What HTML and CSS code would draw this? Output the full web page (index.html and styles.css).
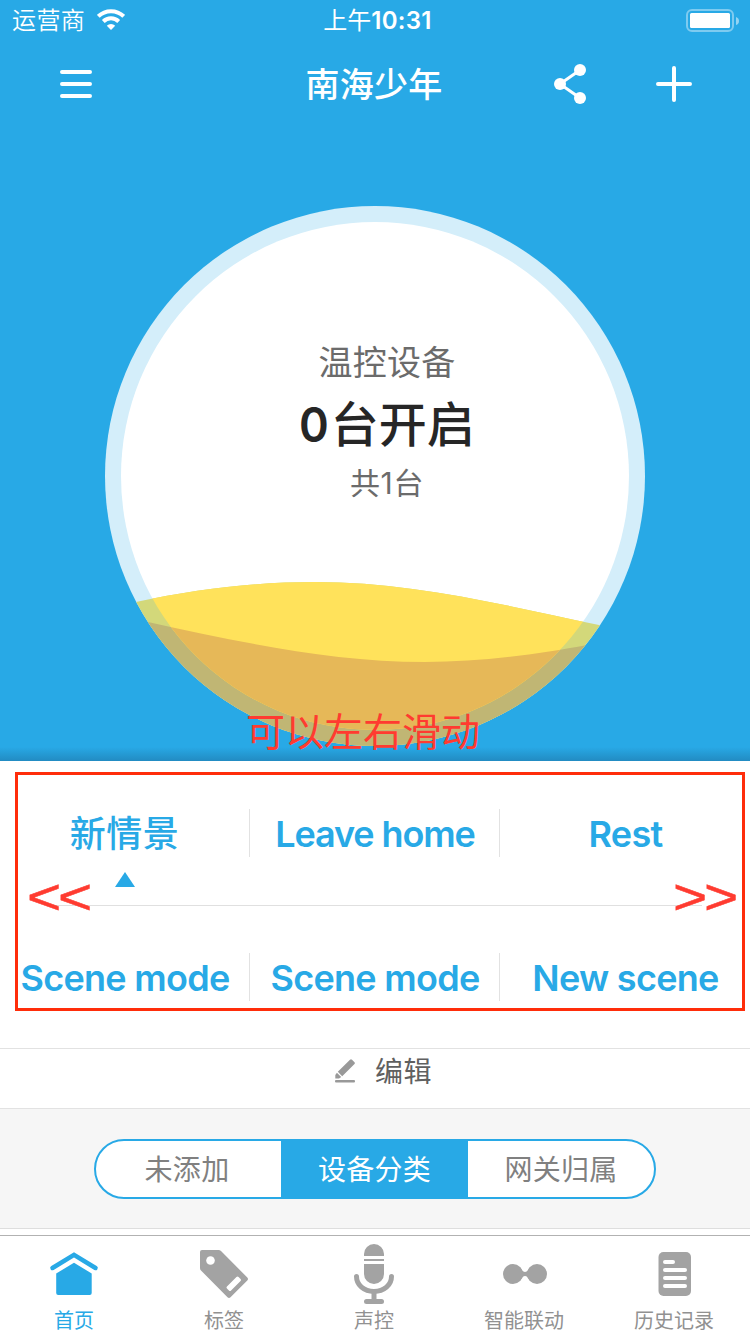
FILE: index.html
```html
<!DOCTYPE html>
<html lang="zh-CN">
<head>
<meta charset="utf-8">
<title>南海少年</title>
<link rel="stylesheet" href="styles.css">
</head>
<body>
<main class="app">
  <section class="hero">
    <div class="status">
      <div class="carrier"><span>运营商</span>
        <svg width="28" height="21" viewBox="0 0 28 21"><g fill="none" stroke="#fff" stroke-width="4"><path d="M1.300 7.300a18.200 18.200 0 0 1 25.400 0"/><path d="M6.300 12.500a11 11 0 0 1 15.400 0"/></g><path d="M14 21l-4.200-4.300a6.200 6.200 0 0 1 8.400 0z" fill="#fff"/></svg>
      </div>
      <div class="clock">上午<b>10:31</b></div>
      <svg class="battery" width="54" height="24" viewBox="0 0 54 24"><rect x="1" y="1" width="46" height="21" rx="5" fill="none" stroke="#fff" stroke-opacity=".4" stroke-width="2"/><rect x="4" y="4" width="40" height="15" rx="1.500" fill="#fff"/><path d="M50 8q3 1 3 4t-3 4z" fill="#fff" fill-opacity=".5"/></svg>
    </div>
    <header class="nav">
      <svg width="32" height="28" viewBox="0 0 32 28" stroke="#fff" stroke-width="4" stroke-linecap="round"><path d="M2 2h28M2 14h28M2 26h28"/></svg>
      <h1>南海少年</h1>
      <div class="actions">
        <svg width="34" height="40" viewBox="0 0 34 40"><path d="M27 6L7 20l20 14" fill="none" stroke="#fff" stroke-width="3"/><g fill="#fff"><circle cx="27" cy="6" r="6"/><circle cx="7" cy="20" r="6"/><circle cx="27" cy="34" r="6"/></g></svg>
        <svg width="36" height="36" viewBox="0 0 36 36" stroke="#fff" stroke-width="4" stroke-linecap="round"><path d="M18 2v32M2 18h32"/></svg>
      </div>
    </header>
    <div class="gauge">
      <svg width="540" height="540" viewBox="105 206 540 540">
        <defs>
          <clipPath id="outer"><circle cx="375" cy="476" r="270"/></clipPath>
          <clipPath id="inner"><circle cx="375" cy="476" r="254"/></clipPath>
          <path id="back" d="M105 609L136 602C200 588 260 582 315 582C410 582 500 604 599 625L645 635V746H105z"/>
          <path id="front" d="M105 612L148 622C240 642 330 662 425 662C480 662 540 654 587 645L645 634V746H105z"/>
        </defs>
        <circle cx="375" cy="476" r="270" fill="#d4eefa"/>
        <circle cx="375" cy="476" r="254" fill="#fff"/>
        <g clip-path="url(#outer)"><use href="#back" fill="#d3d87a"/><use href="#front" fill="#c0b674"/></g>
        <g clip-path="url(#inner)"><use href="#back" fill="#ffe25b"/><use href="#front" fill="#e6b858"/></g>
      </svg>
      <div class="reading">
        <p class="kind">温控设备</p>
        <p class="count"><span>0</span>台开启</p>
        <p class="total">共1台</p>
      </div>
    </div>
    <p class="hint">可以左右滑动</p>
  </section>

  <section class="scenes">
    <div class="scene-row">
      <div class="scene cjk active">新情景</div><div class="scene long">Leave home</div><div class="scene">Rest</div>
    </div>
    <hr class="rule">
    <div class="scene-row">
      <div class="scene">Scene mode</div><div class="scene">Scene mode</div><div class="scene">New scene</div>
    </div>
    <div class="frame"></div>
    <span class="arrows left">&lt;&lt;</span>
    <span class="arrows right">&gt;&gt;</span>
  </section>

  <div class="edit">
    <svg width="21" height="24" viewBox="0 0 21 24" fill="#999"><path d="M15 .8q1-1 2 0l2.500 2.500q.8.8 0 1.600L7.200 17.200 2.800 12.800z"/><path d="M1.900 13.700L6.200 18 4 19.500H.3v-3.500z"/><rect x="0" y="21" width="20" height="2.500" rx="1"/></svg>
    <span>编辑</span>
  </div>

  <div class="filter">
    <div class="segments"><div class="first">未添加</div><div class="on">设备分类</div><div>网关归属</div></div>
  </div>

  <nav class="tabs">
    <div class="tab on"><svg width="60" height="60" viewBox="0 0 60 60"><path d="M8.500 24L30 10.800 51.500 24" fill="none" stroke="#28a9e6" stroke-width="4.500" stroke-linecap="round"/><path d="M30 18.700L47.700 29.500V49q0 2-2 2H14.200q-2 0-2-2V29.500z" fill="#28a9e6"/></svg>首页</div>
    <div class="tab"><svg width="60" height="60" viewBox="0 0 60 60"><path d="M8 6H24.500q1.500 0 2.500 1L53.300 33.500q1.400 1.500 0 3L36.500 53.300q-1.500 1.400-3 0L7 26.500q-1-1-1-2.500V8q0-2 2-2z" fill="#a3a3a3"/><circle cx="16.500" cy="16.500" r="4.300" fill="#fff"/><path d="M43.500 34L45.500 36 36 45.500 34 43.500z" fill="#fff" stroke="#fff" stroke-width="3" stroke-linejoin="round"/></svg>标签</div>
    <div class="tab"><svg width="60" height="60" viewBox="0 0 60 60"><path d="M20 12V10a10 10 0 0 1 20 0v2zM20 15h20v2H20zM20 20h20v10a10 10 0 0 1-20 0z" fill="#a3a3a3"/><path d="M12.500 32.500C12.500 41 20 47.500 30 47.500S47.500 41 47.500 32.500" fill="none" stroke="#a3a3a3" stroke-width="5" stroke-linecap="round"/><path d="M30 48v9" stroke="#a3a3a3" stroke-width="5"/><path d="M22.500 57.500h15" stroke="#a3a3a3" stroke-width="5" stroke-linecap="round"/></svg>声控</div>
    <div class="tab"><svg width="60" height="60" viewBox="0 0 60 60" fill="#a3a3a3"><circle cx="19" cy="30" r="10"/><circle cx="43" cy="30" r="10"/><path d="M26 23Q28.500 28 31 28T36 23V37Q33.500 32 31 32T26 37z"/></svg>智能联动</div>
    <div class="tab"><svg width="60" height="60" viewBox="0 0 60 60"><rect x="14.500" y="8" width="32.500" height="44" rx="5" fill="#a3a3a3"/><path d="M21 18h8M21 26h20M21 34h20M21 42h20" stroke="#fff" stroke-width="4" stroke-linecap="round"/></svg>历史记录</div>
  </nav>
</main>
</body>
</html>
```

FILE: styles.css
```css
* { box-sizing: border-box; margin: 0; padding: 0; }
body { width: 750px; height: 1334px; overflow: hidden; background: #fff; font-family: Inter, "Noto Sans CJK SC", sans-serif; }
svg { display: block; flex: none; }
.app { display: flex; flex-direction: column; height: 1334px; }

.hero { position: relative; height: 761px; background: linear-gradient(to top, #228bc2 0, #28a9e6 14px); color: #fff; }
.status { display: grid; grid-template-columns: 1fr auto 1fr; align-items: center; height: 41px; padding: 0 10px 0 12px; font-size: 24px; line-height: 41px; }
.carrier { display: flex; align-items: center; gap: 12px; font-weight: 350; letter-spacing: .4px; }
.carrier svg { margin-top: -2px; }
.clock { padding: 1px 0 0 3px; line-height: 40px; }
.clock b { font-weight: 600; font-size: 24px; letter-spacing: .3px; }
.battery { justify-self: end; }
.nav { display: grid; grid-template-columns: 1fr auto 1fr; align-items: center; height: 87px; padding: 0 58px 0 60px; }
.nav svg { margin-top: -1px; }
.nav h1 { margin: 1px 2px 0 -2px; font-size: 34px; line-height: 48px; font-weight: 500; letter-spacing: .3px; }
.actions { display: flex; align-items: center; justify-content: flex-end; gap: 69px; }

.gauge { display: grid; width: 540px; height: 540px; margin: 78px auto 0; }
.gauge > * { grid-area: 1 / 1; }
.reading { padding: 132px 0 0 24px; text-align: center; color: #6b6b6b; }
.kind { font-size: 34px; line-height: 50px; letter-spacing: .3px; }
.count { font-size: 48px; line-height: 74px; font-weight: 500; color: #262626; }
.count span { display: inline-block; font-weight: 600; transform: scaleX(.94); transform-origin: left; }
.total { font-size: 30px; line-height: 42px; letter-spacing: .6px; }
.hint { position: absolute; left: 246px; top: 704px; font-size: 39px; line-height: 56px; color: #ff3b30; white-space: nowrap; }

.scenes { position: relative; height: 287px; color: #28a9e6; }
.scene-row { display: grid; grid-template-columns: repeat(3, 250px); align-items: center; height: 144px; }
.scene { position: relative; height: 48px; padding-left: 1px; line-height: 50px; text-align: center; font-size: 36px; font-weight: 600; letter-spacing: -.7px; white-space: nowrap; border-right: 1px solid #e2e2e2; }
.scene:last-child { border-right: 0; }
.long { letter-spacing: -1.1px; }
.cjk { padding: 0; line-height: 51px; font-weight: 500; letter-spacing: .5px; }
.active::after { content: ""; position: absolute; left: 115px; top: 63px; border: 10px solid transparent; border-top: 0; border-bottom: 15px solid #28a9e6; }
.rule { height: 1px; margin: 0 48px -1px; border: 0; background: #e0e0e0; }
.frame { position: absolute; left: 15px; top: 11px; width: 730px; height: 239px; border: 3px solid #ff2d0a; }
.arrows { position: absolute; top: 106px; font: 50px/60px "Liberation Sans", sans-serif; letter-spacing: -2.700px; color: #ff3b30; -webkit-text-stroke: .5px #ff3b30; transform: scaleX(1.17); transform-origin: left; }
.left { left: 27px; }
.right { left: 673px; }

.edit { display: flex; justify-content: center; gap: 19px; height: 61px; padding: 10px 0 0 17px; border: solid #e2e2e2; border-width: 1px 0; font-size: 28px; line-height: 26px; letter-spacing: .4px; color: #606060; }
.filter { height: 120px; padding: 30px 94px 0; background: #f6f6f6; border-bottom: 1px solid #dedede; }
.segments { display: grid; grid-template-columns: 185px 187px 186px; height: 60px; overflow: hidden; border: 2px solid #28a9e6; border-radius: 30px; background: #fff; font-size: 28px; line-height: 58px; letter-spacing: .3px; text-align: center; color: #808080; }
.segments .first { padding-right: 3px; }
.segments .on { background: #28a9e6; color: #fff; }
.tabs { display: grid; grid-template-columns: repeat(5, 150px); height: 99px; margin-top: 6px; border-top: 1px solid #b2b2b2; }
.tab { display: flex; flex-direction: column; align-items: center; padding: 8px 2px 0 0; font-size: 20px; line-height: 34px; font-weight: 400; color: #919191; }
.tab.on { color: #28a9e6; }
```
